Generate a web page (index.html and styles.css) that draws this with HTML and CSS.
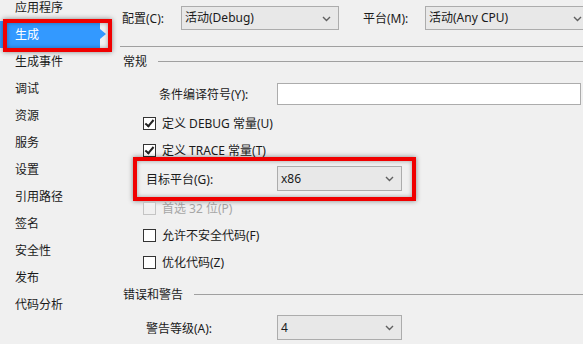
FILE: index.html
```html
<!DOCTYPE html>
<html lang="zh-CN">
<head>
<meta charset="UTF-8" />
<title>项目属性 - 生成</title>
<link rel="stylesheet" href="styles.css">
</head>
<body>

  <div class="page">
    <ul class="nav">
      <li>应用程序</li>
      <li class="active">生成</li>
      <li>生成事件</li>
      <li>调试</li>
      <li>资源</li>
      <li>服务</li>
      <li>设置</li>
      <li>引用路径</li>
      <li>签名</li>
      <li>安全性</li>
      <li>发布</li>
      <li>代码分析</li>
    </ul>
    <div class="nav-mark"></div>

    <div class="main">
      <div class="top-row">
        <span class="top-label">配置(C):</span>
        <div class="select select-config">活动(Debug)
          <svg class="chev" width="9" height="6" viewBox="0 0 9 6"><polyline points="1,1 4.5,4.5 8,1" fill="none" stroke="#606060" stroke-width="1.4"/></svg>
        </div>
        <span class="top-label platform-label">平台(M):</span>
        <div class="select select-platform">活动(Any CPU)
          <svg class="chev" width="9" height="6" viewBox="0 0 9 6"><polyline points="1,1 4.5,4.5 8,1" fill="none" stroke="#606060" stroke-width="1.4"/></svg>
        </div>
      </div>

      <div class="sep"></div>

      <div class="group-title first"><span>常规</span><i></i></div>

      <div class="field-row symbols">
        <span class="field-label">条件编译符号(Y):</span>
        <div class="textbox"></div>
      </div>

      <div class="check-row"><span class="box checked"></span>定义 DEBUG 常量(U)</div>
      <div class="check-row"><span class="box checked"></span>定义 TRACE 常量(T)</div>

      <div class="field-row target">
        <span class="field-label">目标平台(G):</span>
        <div class="select select-small">x86
          <svg class="chev" width="9" height="6" viewBox="0 0 9 6"><polyline points="1,1 4.5,4.5 8,1" fill="none" stroke="#606060" stroke-width="1.4"/></svg>
        </div>
        <div class="target-mark"></div>
      </div>

      <div class="check-row disabled"><span class="box"></span>首选 32 位(P)</div>
      <div class="check-row"><span class="box"></span>允许不安全代码(F)</div>
      <div class="check-row"><span class="box"></span>优化代码(Z)</div>

      <div class="group-title second"><span>错误和警告</span><i></i></div>

      <div class="field-row warn">
        <span class="field-label">警告等级(A):</span>
        <div class="select select-small">4
          <svg class="chev" width="9" height="6" viewBox="0 0 9 6"><polyline points="1,1 4.5,4.5 8,1" fill="none" stroke="#606060" stroke-width="1.4"/></svg>
        </div>
      </div>
    </div>
  </div>

</body>
</html>
```

FILE: styles.css
```css
body {
  margin: 0;
  background: #f0f0f0;
  font-family: "Noto Sans", "Noto Sans CJK SC", sans-serif;
  font-size: 12px;
  color: #1a1a1a;
  overflow: hidden;
}
.page {
  position: relative;
  display: flex;
  width: 583px;
  height: 344px;
  overflow: hidden;
}

/* левое меню */
.nav {
  list-style: none;
  margin: -6px 0 0;
  padding: 0;
  width: 108px;
  flex-shrink: 0;
}
.nav li {
  height: 27px;
  line-height: 27px;
  padding-left: 15px;
  white-space: nowrap;
}
.nav li.active {
  position: relative;
  background: #3399ff;
  color: #fff;
  margin-right: 8px;
}
.nav li.active::after {
  content: "";
  position: absolute;
  right: -6px;
  top: 8px;
  border-left: 6px solid #3399ff;
  border-top: 5px solid transparent;
  border-bottom: 5px solid transparent;
}
.nav-mark {
  position: absolute;
  left: 3px;
  top: 19px;
  width: 101px;
  height: 25px;
  border: 4px solid #f00000;
  box-shadow: 0 0 5px rgba(0, 0, 0, 0.45), inset 0 0 4px rgba(0, 0, 0, 0.35);
}

/* основная часть */
.main {
  flex: 1;
  padding-left: 13px;
  min-width: 0;
}
.top-row {
  display: flex;
  align-items: center;
  margin-top: 6px;
  height: 24px;
  white-space: nowrap;
}
.top-label {
  width: 59px;
  flex-shrink: 0;
  padding-left: 1px;
}
.platform-label {
  margin-left: 23px;
  width: 62px;
}
.select {
  position: relative;
  box-sizing: border-box;
  height: 24px;
  line-height: 22px;
  border: 1px solid #acacac;
  background: #e8e8e8;
  padding-left: 3px;
  flex-shrink: 0;
}
.select-config {
  width: 158px;
}
.select-platform {
  width: 170px;
}
.select-platform .chev {
  right: 12px;
}
.select-small {
  width: 125px;
  height: 25px;
  line-height: 23px;
}
.chev {
  position: absolute;
  right: 7px;
  top: 9px;
}
.sep {
  margin-top: 16px;
  height: 1px;
  background: #a0a0a0;
  margin-left: -1px;
}
.group-title {
  display: flex;
  align-items: center;
  height: 14px;
  padding-left: 2px;
}
.group-title.first {
  margin-top: 7px;
}
.group-title.second {
  margin-top: 12px;
}
.group-title i {
  flex: 1;
  height: 1px;
  background: #a0a0a0;
  margin-left: 11px;
}
.field-row {
  display: flex;
  align-items: center;
  position: relative;
}
.field-label {
  padding-left: 25px;
  width: 131px;
  flex-shrink: 0;
}
.symbols {
  margin-top: 15px;
  height: 22px;
}
.symbols .field-label {
  padding-left: 38px;
  width: 118px;
}
.textbox {
  box-sizing: border-box;
  width: 304px;
  height: 22px;
  background: #fff;
  border: 1px solid #acacac;
}
.check-row {
  display: flex;
  align-items: center;
  height: 27px;
  padding-left: 22px;
}
.symbols + .check-row {
  margin-top: 4px;
}
.box {
  position: relative;
  box-sizing: border-box;
  width: 13px;
  height: 13px;
  border: 1px solid #333;
  background: #fff;
  margin-right: 6px;
  margin-top: 1px;
}
.box.checked::after {
  content: "";
  position: absolute;
  left: 3px;
  top: 0px;
  width: 3px;
  height: 7px;
  border-right: 2px solid #222;
  border-bottom: 2px solid #222;
  transform: rotate(40deg);
}
.check-row.disabled {
  color: #a6a6a6;
}
.check-row.disabled .box {
  border-color: #c4c4c4;
  background: #f0f0f0;
}
.target {
  margin-top: 3px;
  height: 25px;
}
.target + .check-row {
  margin-top: 3px;
}
.target-mark {
  position: absolute;
  left: 12px;
  top: -9px;
  width: 275px;
  height: 36px;
  border: 4px solid #f00000;
  box-shadow: 0 0 5px rgba(0, 0, 0, 0.45), inset 0 0 4px rgba(0, 0, 0, 0.35);
}
.warn {
  margin-top: 14px;
  height: 25px;
}
```
